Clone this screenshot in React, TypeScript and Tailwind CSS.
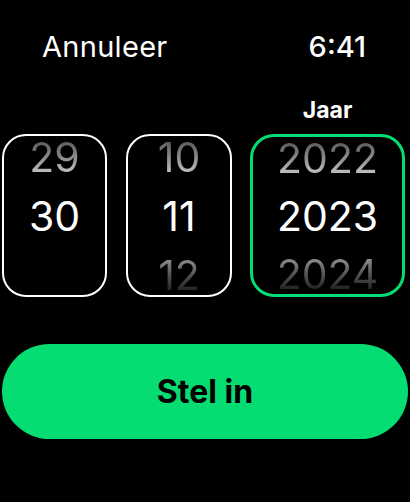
const font = { fontFamily: "Inter, 'Noto Sans', sans-serif" }

function Wheel({ top, mid, bottom, topFade, bottomFade, className, gap }: { top?: string; mid: string; bottom?: string; topFade: string; bottomFade: string; className: string; gap: string }) {
  return (
    <div className={`flex flex-col items-center justify-center overflow-hidden rounded-[24px] h-[163px] ${gap} ${className}`}>
      <div className={`h-[40px] shrink-0 leading-[40px] text-[41px] bg-clip-text text-transparent ${topFade}`}>{top ?? "\u00a0"}</div>
      <div className="h-[40px] shrink-0 leading-[40px] text-[41px] text-white">{mid}</div>
      <div className={`h-[40px] shrink-0 leading-[40px] text-[41px] bg-clip-text text-transparent ${bottomFade}`}>{bottom ?? "\u00a0"}</div>
    </div>
  )
}

export default function App() {
  return (
    <div className="w-[410px] h-[502px] bg-black text-white overflow-hidden" style={font}>
      <div className="flex justify-between items-center pl-[42px] pr-[44px] pt-[27px] h-[66px]">
        <span className="text-[29px] leading-none tracking-[0.3px]">Annuleer</span>
        <span className="text-[29px] leading-none font-medium">6:41</span>
      </div>
      <div className="flex pl-[2px] mt-[33px]">
        <div className="w-[105px]" />
        <div className="w-[106px] ml-[19px]" />
        <div className="w-[155px] ml-[18px] text-center text-[23px] font-bold leading-none">Jaar</div>
      </div>
      <div className="flex pl-[2px] mt-[12px]">
        <Wheel
          className="w-[105px] border-2 border-white"
          gap="gap-[19px]"
          top="29"
          mid="30"
          topFade="bg-linear-to-b from-[#4e4e4e] to-[#cfcfcf]"
          bottomFade="bg-linear-to-b from-[#a0a0a0] to-[#151515]"
        />
        <Wheel
          className="w-[106px] ml-[19px] border-2 border-white"
          gap="gap-[19px]"
          top="10"
          mid="11"
          bottom="12"
          topFade="bg-linear-to-b from-[#4e4e4e] to-[#cfcfcf]"
          bottomFade="bg-linear-to-b from-[#a0a0a0] to-[#151515]"
        />
        <Wheel
          className="w-[155px] ml-[18px] border-[3px] border-[#05dc72]"
          gap="gap-[18px]"
          top="2022"
          mid="2023"
          bottom="2024"
          topFade="bg-linear-to-b from-[#4e4e4e] to-[#cfcfcf]"
          bottomFade="bg-linear-to-b from-[#a0a0a0] to-[#151515]"
        />
      </div>
      <div className="px-[2px] mt-[47px]">
        <button className="w-full h-[95px] rounded-full bg-[#05dd72] text-black text-[32px] font-bold">
          Stel in
        </button>
      </div>
    </div>
  )
}
